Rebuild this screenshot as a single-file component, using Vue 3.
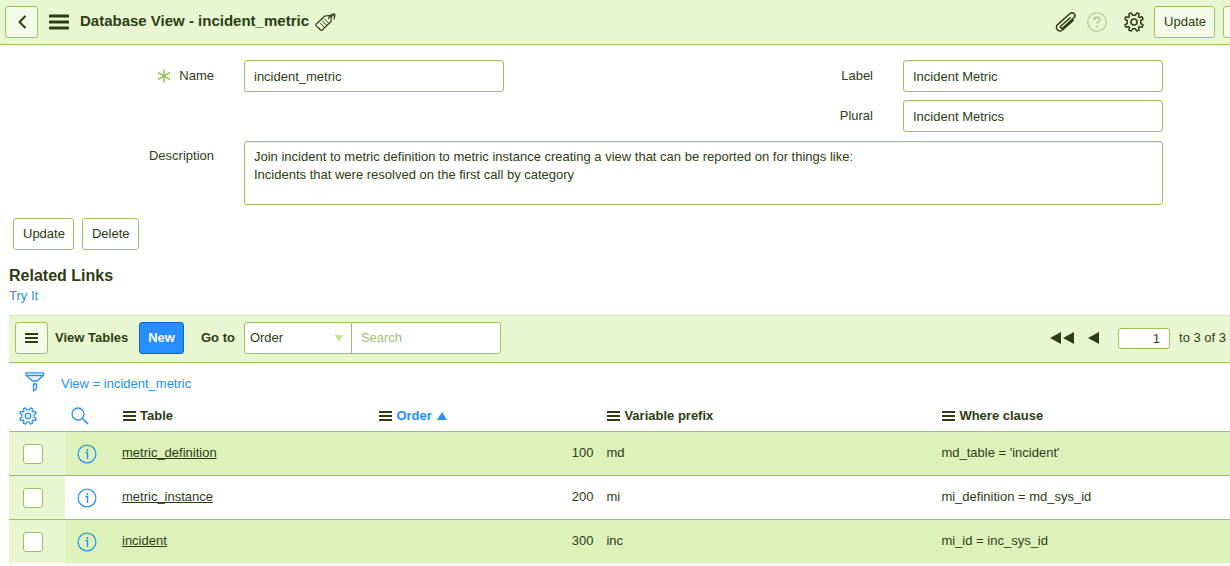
<script setup>
import { ref } from 'vue'

const name = ref('incident_metric')
const label = ref('Incident Metric')
const plural = ref('Incident Metrics')
const description = ref(
  'Join incident to metric definition to metric instance creating a view that can be reported on for things like:\nIncidents that were resolved on the first call by category'
)
const goTo = ref('Order')
const page = ref('1')
const rows = ref([
  { table: 'metric_definition', order: 100, prefix: 'md', where: "md_table = 'incident'", checked: false },
  { table: 'metric_instance', order: 200, prefix: 'mi', where: 'mi_definition = md_sys_id', checked: false },
  { table: 'incident', order: 300, prefix: 'inc', where: 'mi_id = inc_sys_id', checked: false }
])
</script>

<template>
  <div class="page">
    <header class="topbar">
      <button class="btn square" type="button" aria-label="Back">
        <svg width="16" height="16" viewBox="0 0 16 16"><path d="M11.500 2 5.500 8l6 6" fill="none" stroke="currentColor" stroke-width="2" /></svg>
      </button>
      <button class="plain menu" type="button" aria-label="Menu">
        <svg width="20" height="16" viewBox="0 0 20 16"><path d="M1 2h18M1 8h18M1 14h18" stroke="currentColor" stroke-width="3" stroke-linecap="round" /></svg>
      </button>
      <h1>Database View - incident_metric</h1>
      <button class="plain" type="button" aria-label="Tags">
        <svg width="21" height="20" viewBox="0 0 21 20" fill="none" stroke="currentColor" stroke-width="1.200" stroke-linejoin="round" stroke-linecap="round">
          <path d="M10 4 15 3.500q1 .1 1.200 1.200L16 9.500 7.300 18q-.9.800-1.800 0L1.300 13.800q-.8-.9 0-1.800Z" />
          <path d="M13.500 6.500q1-3.500 4-4.500 2.800-.5 2.300 1.500L19 7M16 4.500l2.500-1.200" />
          <path d="m5.500 11.500 3.500 3.500M7.800 9.500l3.500 3.500M10 7.500l3 3" stroke-width="1" />
        </svg>
      </button>
      <div class="tools">
        <button class="plain" type="button" aria-label="Attachments">
          <svg width="22" height="20" viewBox="-11 -10 22 20" fill="none" stroke="currentColor" stroke-width="1.500" stroke-linecap="round">
            <path transform="rotate(-42)" d="M6.500 3.600H-8a3.600 3.600 0 0 1 0-7.200H8.700a2.900 2.900 0 0 1 0 5.800H-6.500a1.300 1.300 0 0 1 0-2.600H6" />
          </svg>
        </button>
        <button class="plain help" type="button" aria-label="Help">
          <svg width="20" height="20" viewBox="0 0 20 20" fill="none" stroke="currentColor">
            <circle cx="10" cy="10" r="9.300" stroke-width="1.300" />
            <path d="M7.200 8q0-2.700 2.800-2.700T12.800 7.800c0 1.700-2.700 1.900-2.700 4M10.100 13.300v1.900" stroke-width="1.900" />
          </svg>
        </button>
        <button class="plain gear" type="button" aria-label="Settings">
          <svg width="20" height="20" viewBox="0 0 20 20" fill="none" stroke="currentColor" stroke-width="1.500" stroke-linejoin="round">
            <path d="M8.500 3.200 7.200.9 4.800 1.900l.7 2.600-1 1-2.600-.7-1 2.400 2.300 1.300v3L.9 12.800l1 2.400 2.600-.7 1 1-.7 2.600 2.400 1 1.300-2.300h3l1.300 2.300 2.400-1-.7-2.600 1-1 2.600.7 1-2.400-2.300-1.300v-3l2.300-1.300-1-2.400-2.600.7-1-1 .7-2.600-2.400-1-1.300 2.300Z" />
            <circle cx="10" cy="10" r="3" />
          </svg>
        </button>
        <button class="btn" type="button">Update</button>
        <button class="btn cut" type="button" aria-label="Delete"></button>
      </div>
    </header>

    <form class="record" @submit.prevent>
      <label class="lbl" for="f-name">
        <svg class="required" width="14" height="14" viewBox="0 0 14 14"><path d="M7 .5v13M1 3.500l12 7M1 10.500l12-7" stroke="currentColor" stroke-width="1.500" /></svg>
        Name
      </label>
      <input id="f-name" v-model="name" class="field" type="text" />
      <label class="lbl" for="f-label">Label</label>
      <input id="f-label" v-model="label" class="field" type="text" />
      <label class="lbl second" for="f-plural">Plural</label>
      <input id="f-plural" v-model="plural" class="field" type="text" />
      <label class="lbl" for="f-desc">Description</label>
      <textarea id="f-desc" v-model="description" class="field wide" rows="3"></textarea>
    </form>

    <div class="actions">
      <button class="btn" type="button">Update</button>
      <button class="btn" type="button">Delete</button>
    </div>

    <section class="links">
      <h2>Related Links</h2>
      <a href="#">Try It</a>
    </section>

    <section class="list">
      <div class="listbar">
        <button class="btn square" type="button" aria-label="List menu">
          <svg width="13" height="10" viewBox="0 0 13 10"><path d="M0 1h13M0 5h13M0 9h13" stroke="currentColor" stroke-width="2" /></svg>
        </button>
        <h3>View Tables</h3>
        <button class="btn primary" type="button">New</button>
        <label class="goto" for="goto">Go to</label>
        <div class="search">
          <div class="selectbox">
            <select id="goto" v-model="goTo">
              <option>Order</option>
            </select>
            <svg class="caret" width="8" height="7" viewBox="0 0 8 7"><path d="M0 0h8L4 7Z" fill="currentColor" /></svg>
          </div>
          <input type="text" placeholder="Search" aria-label="Search" />
        </div>
        <div class="pager">
          <button class="plain" type="button" aria-label="First page">
            <svg width="24" height="12" viewBox="0 0 24 12"><path d="M0 6 11 0v12ZM13 6 24 0v12Z" fill="currentColor" /></svg>
          </button>
          <button class="plain prev" type="button" aria-label="Previous page">
            <svg width="11" height="12" viewBox="0 0 11 12"><path d="M0 6 11 0v12Z" fill="currentColor" /></svg>
          </button>
          <input v-model="page" type="text" aria-label="Page" />
          <span>to 3 of 3</span>
        </div>
      </div>

      <div class="crumbs">
        <button class="plain blue" type="button" aria-label="Filter">
          <svg width="20" height="20" viewBox="0 0 20 20" fill="none" stroke="currentColor" stroke-width="1.300">
            <path d="M1 .8h17.500v2.500L12 9H7.500L1 3.300ZM1 3.500h17.500M8.500 12h3v4.500l-3 2.500Z" />
          </svg>
        </button>
        <a href="#">View = incident_metric</a>
      </div>

      <table>
        <colgroup>
          <col class="c-check" /><col class="c-info" /><col class="c-table" /><col class="c-order" /><col class="c-prefix" /><col />
        </colgroup>
        <thead>
          <tr>
            <th>
              <button class="plain blue" type="button" aria-label="Personalize list">
                <svg width="18" height="18" viewBox="0 0 20 20" fill="none" stroke="currentColor" stroke-width="1.400" stroke-linejoin="round">
                  <path d="M8.500 3.200 7.200.9 4.800 1.900l.7 2.600-1 1-2.600-.7-1 2.400 2.300 1.300v3L.9 12.800l1 2.400 2.600-.7 1 1-.7 2.600 2.400 1 1.300-2.300h3l1.300 2.300 2.400-1-.7-2.600 1-1 2.600.7 1-2.400-2.300-1.300v-3l2.300-1.300-1-2.400-2.600.7-1-1 .7-2.600-2.400-1-1.300 2.300Z" />
                  <circle cx="10" cy="10" r="3" />
                </svg>
              </button>
            </th>
            <th class="h-find">
              <button class="plain blue" type="button" aria-label="Search columns">
                <svg width="18" height="18" viewBox="0 0 18 18" fill="none" stroke="currentColor"><circle cx="7" cy="7" r="6" stroke-width="1.300" /><path d="m11.500 11.500 5.500 5.500" stroke-width="1.700" /></svg>
              </button>
            </th>
            <th v-for="h in ['Table', 'Order', 'Variable prefix', 'Where clause']" :key="h">
              <span class="head">
                <svg width="13" height="10" viewBox="0 0 13 10"><path d="M0 1h13M0 5h13M0 9h13" stroke="currentColor" stroke-width="2" /></svg>
                <a v-if="h === 'Order'" class="sorted" href="#">Order
                  <svg width="10" height="8" viewBox="0 0 10 8"><path d="M5 0 10 8H0Z" fill="currentColor" /></svg>
                </a>
                <span v-else>{{ h }}</span>
              </span>
            </th>
          </tr>
        </thead>
        <tbody>
          <tr v-for="row in rows" :key="row.table">
            <td class="check"><input v-model="row.checked" type="checkbox" :aria-label="'Select ' + row.table" /></td>
            <td class="info">
              <button class="plain blue" type="button" :aria-label="'Preview ' + row.table">
                <svg width="20" height="20" viewBox="0 0 20 20" fill="none" stroke="currentColor">
                  <circle cx="10" cy="10" r="8.900" stroke-width="1.200" /><path d="M8.500 8.500h2v6.500M10.400 5v2" stroke-width="1.400" />
                </svg>
              </button>
            </td>
            <td><a href="#">{{ row.table }}</a></td>
            <td class="num">{{ row.order }}</td>
            <td>{{ row.prefix }}</td>
            <td>{{ row.where }}</td>
          </tr>
        </tbody>
      </table>
    </section>
  </div>
</template>

<style>
body {
  background: #fff;
}
</style>

<style scoped>
.page {
  color: #2e3d14;
  font: 13px/18px "Liberation Sans", Arial, sans-serif;
  overflow: hidden;
}
.page * {
  box-sizing: border-box;
}
button,
input,
select,
textarea {
  font: inherit;
  color: inherit;
  margin: 0;
}
svg {
  display: block;
  flex: none;
}
h1,
h2,
h3 {
  margin: 0;
  font-weight: bold;
}
a {
  color: #278efc;
  text-decoration: none;
}
.plain {
  display: block;
  border: 0;
  padding: 0;
  background: none;
  flex: none;
}
.btn {
  flex: none;
  height: 32px;
  padding: 0 8px 0 9px;
  border: 1px solid #9cc15f;
  border-radius: 3px;
  background: rgba(255, 255, 255, 0.5);
}
.square {
  width: 33px;
  display: flex;
  align-items: center;
  justify-content: center;
  padding: 0;
}
.primary {
  margin-left: 11px;
  padding: 0 8px;
  border-color: #0b66cf;
  background: #278efc;
  color: #fff;
  font-weight: bold;
}
.blue {
  color: #278efc;
}
.topbar {
  display: flex;
  align-items: center;
  height: 45px;
  padding-left: 5px;
  border-bottom: 1px solid #9cc15f;
  background: #e8f7d1;
  box-shadow: 0 1px 3px rgba(0, 0, 0, 0.08);
}
.menu {
  margin: 0 11px;
}
h1 {
  margin-right: 6px;
  padding-bottom: 2px;
  font-size: 15px;
  line-height: 20px;
  white-space: nowrap;
}
.tools {
  display: flex;
  align-items: center;
  margin-left: auto;
}
.help {
  margin-left: 10px;
  color: #b8cc99;
}
.gear {
  margin: 0 10px 0 17px;
}
.cut {
  width: 57px;
  margin: 0 -50px 0 8px;
}
.record {
  display: grid;
  grid-template-columns: 244px minmax(0, 260fr) 399px minmax(0, 260fr);
  row-gap: 8px;
  padding: 15px 67px 0 0;
}
.lbl {
  display: flex;
  justify-content: flex-end;
  gap: 8px;
  padding: 7px 30px 0 0;
}
.required {
  margin-top: 2px;
  color: #9cc15f;
}
.second {
  grid-column: 3;
}
.field {
  width: 100%;
  height: 32px;
  padding: 0 9px;
  border: 1px solid #9cc15f;
  border-radius: 3px;
  background: #fff;
  box-shadow: inset 0 1px 1px rgba(0, 0, 0, 0.075);
}
.wide {
  grid-column: 2 / 5;
  display: block;
  height: 64px;
  margin-top: 1px;
  padding: 6px 9px;
  resize: none;
}
.actions {
  display: flex;
  gap: 8px;
  padding: 13px 13px 0;
}
.links {
  padding: 15px 9px 0;
}
h2 {
  font-size: 16px;
  line-height: 22px;
}
.links a {
  display: block;
}
.list {
  margin: 10px 0 0 9px;
}
.listbar {
  display: flex;
  align-items: center;
  height: 48px;
  padding: 0 0 2px 6px;
  border-top: 1px solid #d5ebb0;
  border-bottom: 1px solid #9cc15f;
  background: #e8f7d1;
  box-shadow: 0 1px 3px rgba(0, 0, 0, 0.08);
}
h3 {
  margin-left: 7px;
  font-size: 13px;
}
.goto {
  margin: 0 9px 0 17px;
  font-weight: bold;
}
.search {
  display: flex;
  width: 257px;
  height: 32px;
  border: 1px solid #9cc15f;
  border-radius: 3px;
  background: #fff;
}
.selectbox {
  display: grid;
  width: 107px;
  align-items: center;
  border-right: 1px solid #9cc15f;
}
.selectbox > * {
  grid-area: 1 / 1;
}
select {
  appearance: none;
  width: 100%;
  height: 30px;
  padding: 0 5px;
  border: 0;
  background: none;
}
.caret {
  justify-self: end;
  margin-right: 8px;
  color: #c3e591;
  pointer-events: none;
}
.search input {
  flex: 1;
  min-width: 0;
  padding: 0 9px;
  border: 0;
  background: none;
}
.search input::placeholder {
  color: #9cc17a;
  opacity: 1;
}
.pager {
  display: flex;
  align-items: center;
  margin: 0 4px 0 auto;
  white-space: nowrap;
}
.prev {
  margin: 0 19px 0 14px;
}
.pager input {
  width: 52px;
  height: 21px;
  margin-right: 9px;
  padding: 0 9px;
  border: 1px solid #9cc15f;
  border-radius: 3px;
  background: #fff;
  text-align: right;
}
.crumbs {
  display: flex;
  align-items: center;
  gap: 16px;
  height: 37px;
  padding: 4px 0 0 16px;
}
.crumbs .plain {
  padding-bottom: 4px;
}
table {
  width: 100%;
  table-layout: fixed;
  border-collapse: separate;
  border-spacing: 0;
}
.c-check {
  width: 56px;
}
.c-info {
  width: 48px;
}
.c-table {
  width: 21%;
}
.c-order {
  width: 228px;
}
.c-prefix {
  width: 335px;
}
th {
  height: 31px;
  padding: 0 0 0 10px;
  text-align: left;
}
th.h-find {
  padding-left: 6px;
}
.head,
.sorted {
  display: flex;
  align-items: center;
  gap: 4px;
}
.sorted {
  gap: 5px;
}
td {
  height: 44px;
  padding: 0 9px 2px;
  border-top: 1px solid #9cc15f;
}
tbody tr:nth-child(odd) td {
  background: #ddf2bb;
}
tbody tr td.check {
  padding: 0 0 0 14px;
  background: #e8f7d1;
}
td a {
  color: inherit;
  text-decoration: underline;
}
td.info {
  padding: 0 0 0 12px;
}
td.num {
  padding-right: 4px;
  text-align: right;
}
.check input {
  appearance: none;
  display: block;
  width: 20px;
  height: 20px;
  border: 1px solid #9cc15f;
  border-radius: 3px;
  background: #fff;
}
</style>
